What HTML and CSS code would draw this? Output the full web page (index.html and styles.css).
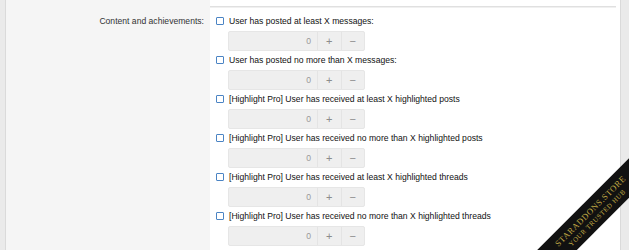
FILE: index.html
```html
<!DOCTYPE html>
<html>
<head>
<meta charset="utf-8">
<link rel="stylesheet" href="styles.css">
</head>
<body>
<div class="frame">
  <div class="lbl-col">
    <div class="lbl">Content and achievements:</div>
  </div>
  <div class="ctl-col">
    <div class="spacer"></div>
    <div class="sep"></div>
    <ul class="opts">
      <li>
        <label class="check"><span class="box"></span><span>User has posted at least X messages:</span></label>
        <div class="spin"><span class="val">0</span><span class="btn">+</span><span class="btn">−</span></div>
      </li>
      <li>
        <label class="check"><span class="box"></span><span>User has posted no more than X messages:</span></label>
        <div class="spin"><span class="val">0</span><span class="btn">+</span><span class="btn">−</span></div>
      </li>
      <li>
        <label class="check"><span class="box"></span><span>[Highlight Pro] User has received at least X highlighted posts</span></label>
        <div class="spin"><span class="val">0</span><span class="btn">+</span><span class="btn">−</span></div>
      </li>
      <li>
        <label class="check"><span class="box"></span><span>[Highlight Pro] User has received no more than X highlighted posts</span></label>
        <div class="spin"><span class="val">0</span><span class="btn">+</span><span class="btn">−</span></div>
      </li>
      <li>
        <label class="check"><span class="box"></span><span>[Highlight Pro] User has received at least X highlighted threads</span></label>
        <div class="spin"><span class="val">0</span><span class="btn">+</span><span class="btn">−</span></div>
      </li>
      <li>
        <label class="check"><span class="box"></span><span>[Highlight Pro] User has received no more than X highlighted threads</span></label>
        <div class="spin"><span class="val">0</span><span class="btn">+</span><span class="btn">−</span></div>
      </li>
    </ul>
  </div>
</div>
<div class="clip">
  <div class="ribbon">
    <div class="r1">STARADDONS.STORE</div>
    <div class="r2">YOUR TRUSTED HUB</div>
  </div>
</div>
</body>
</html>
```
FILE: styles.css
```css
html, body {
  margin: 0;
  padding: 0;
  height: 250px;
  overflow: hidden;
}
body {
  background: #eaeaea;
  font-family: "Liberation Sans", Arial, sans-serif;
  font-size: 8.6px;
  color: #1a1a1a;
  position: relative;
}
.frame {
  display: flex;
  height: 250px;
  margin: 0 8px 0 5px;
  border-left: 1px solid #dadada;
  border-right: 1px solid #dadada;
}
.lbl-col {
  width: 204px;
  background: #f5f5f5;
  box-sizing: border-box;
  padding: 14px 6px 0 0;
}
.lbl {
  text-align: right;
  line-height: 14px;
  color: #333;
}
.ctl-col {
  flex: 1;
  background: #fff;
}
.spacer {
  height: 6px;
}
.sep {
  height: 1px;
  background: #e0e0e0;
  border-bottom: 1px solid #f0f0f0;
  margin-right: 4px;
}
.opts {
  list-style: none;
  margin: 0;
  padding: 6px 0 0 6px;
}
.check {
  display: flex;
  align-items: center;
  gap: 5px;
  height: 14px;
  line-height: 14px;
  color: #111;
}
.box {
  width: 6px;
  height: 6px;
  border: 1px solid #4b84c4;
  border-radius: 1px;
  background: #fff;
  flex: none;
}
.spin {
  display: flex;
  width: 137px;
  height: 20px;
  box-sizing: border-box;
  margin: 3px 0 2px 12px;
  background: #efefef;
  border: 1px solid #e6e6e6;
  border-radius: 2px;
  color: #8a8a8a;
  line-height: 18px;
}
.val {
  width: 88px;
  box-sizing: border-box;
  text-align: right;
  padding-right: 6px;
  color: #999;
}
.btn {
  flex: 1;
  text-align: center;
  border-left: 1px solid #e4e4e4;
  font-size: 11px;
  color: #8c8c8c;
}
.clip {
  position: absolute;
  left: 0;
  top: 0;
  width: 629px;
  height: 250px;
  overflow: hidden;
  pointer-events: none;
}
.ribbon {
  position: absolute;
  left: 490px;
  top: 203px;
  width: 200px;
  height: 28px;
  background: #111;
  transform: rotate(-45deg);
  display: flex;
  flex-direction: column;
  align-items: center;
  justify-content: center;
  padding-left: 9px;
  box-sizing: border-box;
  font-family: "Liberation Serif", "Times New Roman", serif;
  color: #c2ab45;
}
.r1 {
  font-size: 8.6px;
  line-height: 10px;
  letter-spacing: 0.6px;
}
.r2 {
  font-size: 6.8px;
  line-height: 9px;
  letter-spacing: 0.6px;
}
```
